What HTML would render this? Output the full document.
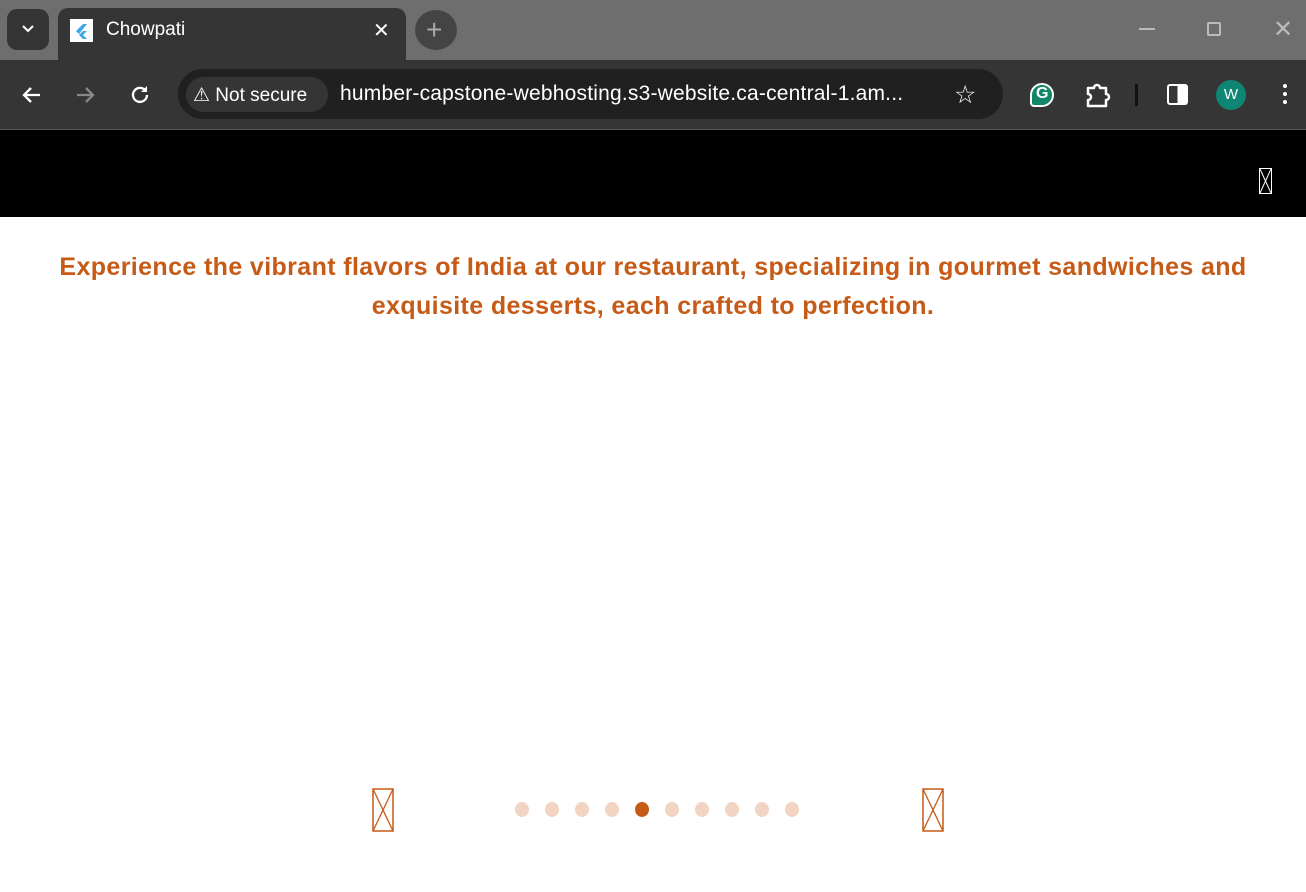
<!DOCTYPE html>
<html><head><meta charset="utf-8"><style>
*{margin:0;padding:0;box-sizing:border-box}
body{width:1306px;height:892px;overflow:hidden;background:#fff;font-family:"Liberation Sans",sans-serif;position:relative}
.abs{position:absolute}
.top{left:0;top:0;width:1306px;height:60px;background:#6e6e6e}
.tab{left:58px;top:8px;width:348px;height:52px;background:#353535;border-radius:10px 10px 0 0}
.bar{left:0;top:60px;width:1306px;height:69px;background:#353535}
.omni{left:178px;top:69px;width:825px;height:50px;background:#202020;border-radius:25px}
.pill{left:186px;top:77px;width:142px;height:35px;background:#353535;border-radius:18px}
.hdr{left:0;top:130px;width:1306px;height:87px;background:#000}
.dot{width:14px;height:15px;border-radius:50%;background:#f1d5c2;top:802px}
</style></head><body>
<div class="abs top"></div>
<div class="abs" style="left:7px;top:9px;width:42px;height:41px;background:#353535;border-radius:10px"></div>
<svg class="abs" style="left:20px;top:22px" width="16" height="14"><path d="M3 4l5 5 5-5" stroke="#fff" stroke-width="2" fill="none"/></svg>
<div class="abs tab"></div>
<div class="abs" style="left:70px;top:19px;width:23px;height:23px;background:#fff"></div>
<svg class="abs" style="left:72px;top:21px" width="19" height="19"><path d="M11 3L4 10l3 3 8-10zM11 10l-4 4 4 4h4l-4-4 4-4z" fill="#3fa7e8"/></svg>
<div class="abs" style="left:106px;top:19px;color:#fff;font-size:19px">Chowpati</div>
<div class="abs" style="left:373px;top:18px;color:#fff;font-size:20px">✕</div>
<div class="abs" style="left:415px;top:10px;width:42px;height:40px;background:#444;border-radius:50%"></div>
<div class="abs" style="left:426px;top:14px;color:#aaa;font-size:28px">+</div>
<div class="abs" style="left:1139px;top:28px;width:16px;height:2px;background:#bbb"></div>
<div class="abs" style="left:1207px;top:22px;width:14px;height:14px;border:2px solid #bbb;border-radius:2px"></div>
<div class="abs" style="left:1273px;top:15px;color:#bbb;font-size:24px">✕</div>
<div class="abs bar"></div>
<svg class="abs" style="left:20px;top:83px" width="24" height="24"><path d="M20 12H5M11 5l-7 7 7 7" stroke="#fff" stroke-width="2.3" fill="none"/></svg>
<svg class="abs" style="left:73px;top:83px" width="24" height="24"><path d="M4 12h15M13 5l7 7-7 7" stroke="#888" stroke-width="2.3" fill="none"/></svg>
<svg class="abs" style="left:128px;top:83px" width="24" height="24"><path d="M19 12a7 7 0 1 1-2-5" stroke="#fff" stroke-width="2.3" fill="none"/><path d="M19 3v6h-6z" fill="#fff"/></svg>
<div class="abs omni"></div>
<div class="abs pill"></div>
<div class="abs" style="left:193px;top:84px;color:#fff;font-size:19px">⚠ Not secure</div>
<div class="abs" style="left:340px;top:82px;color:#fff;font-size:21px;letter-spacing:0.2px">humber-capstone-webhosting.s3-website.ca-central-1.am...</div>
<div class="abs" style="left:954px;top:80px;color:#fff;font-size:25px">☆</div>
<div class="abs" style="left:1030px;top:83px;width:24px;height:24px;background:#11876a;border-radius:50% 50% 50% 4px;border:2px solid #fff"></div>
<div class="abs" style="left:1036px;top:85px;color:#fff;font-size:16px;font-weight:bold">G</div>
<svg class="abs" style="left:1084px;top:81px" width="28" height="28"><path d="M4 7h6a3 3 0 0 1 6 0h6v6a3 3 0 0 1 0 6v6H4v-6a3 3 0 0 0 0-6z" fill="none" stroke="#fff" stroke-width="2.5" stroke-linejoin="round"/></svg>
<div class="abs" style="left:1135px;top:84px;width:3px;height:22px;background:#111"></div>
<div class="abs" style="left:1167px;top:84px;width:21px;height:21px;border:2.5px solid #fff;border-radius:3px;background:linear-gradient(90deg,transparent 50%,#fff 50%)"></div>
<div class="abs" style="left:1216px;top:80px;width:30px;height:30px;background:#0f8574;border-radius:50%;color:#fff;font-size:15px;text-align:center;line-height:30px">W</div>
<div class="abs" style="left:1283px;top:84px;width:4px;height:4px;background:#fff;border-radius:50%;box-shadow:0 8px #fff,0 16px #fff"></div>
<div class="abs" style="left:0;top:129px;width:1306px;height:1px;background:#555"></div>
<div class="abs hdr"></div>
<svg class="abs" style="left:1259px;top:168px" width="13" height="26"><rect x=".5" y=".5" width="12" height="25" fill="none" stroke="#fff"/><path d="M1 1l11 24M12 1L1 25" stroke="#fff"/></svg>
<div class="abs" style="left:0;top:248px;width:1306px;text-align:center;color:#c65a17;font-size:25px;font-weight:bold;line-height:39px;letter-spacing:0.38px">Experience the vibrant flavors of India at our restaurant, specializing in gourmet sandwiches and<br>exquisite desserts, each crafted to perfection.</div>
<svg class="abs" style="left:372px;top:788px" width="22" height="44"><rect x="1" y="1" width="20" height="42" fill="none" stroke="#c65a17" stroke-width="1.5"/><path d="M1 1l20 42M21 1L1 43" stroke="#c65a17" stroke-width="1.3"/></svg>
<svg class="abs" style="left:922px;top:788px" width="22" height="44"><rect x="1" y="1" width="20" height="42" fill="none" stroke="#c65a17" stroke-width="1.5"/><path d="M1 1l20 42M21 1L1 43" stroke="#c65a17" stroke-width="1.3"/></svg>
<div class="abs dot" style="left:515px"></div>
<div class="abs dot" style="left:545px"></div>
<div class="abs dot" style="left:575px"></div>
<div class="abs dot" style="left:605px"></div>
<div class="abs dot" style="left:635px;background:#c65a17"></div>
<div class="abs dot" style="left:665px"></div>
<div class="abs dot" style="left:695px"></div>
<div class="abs dot" style="left:725px"></div>
<div class="abs dot" style="left:755px"></div>
<div class="abs dot" style="left:785px"></div>
</body></html>
